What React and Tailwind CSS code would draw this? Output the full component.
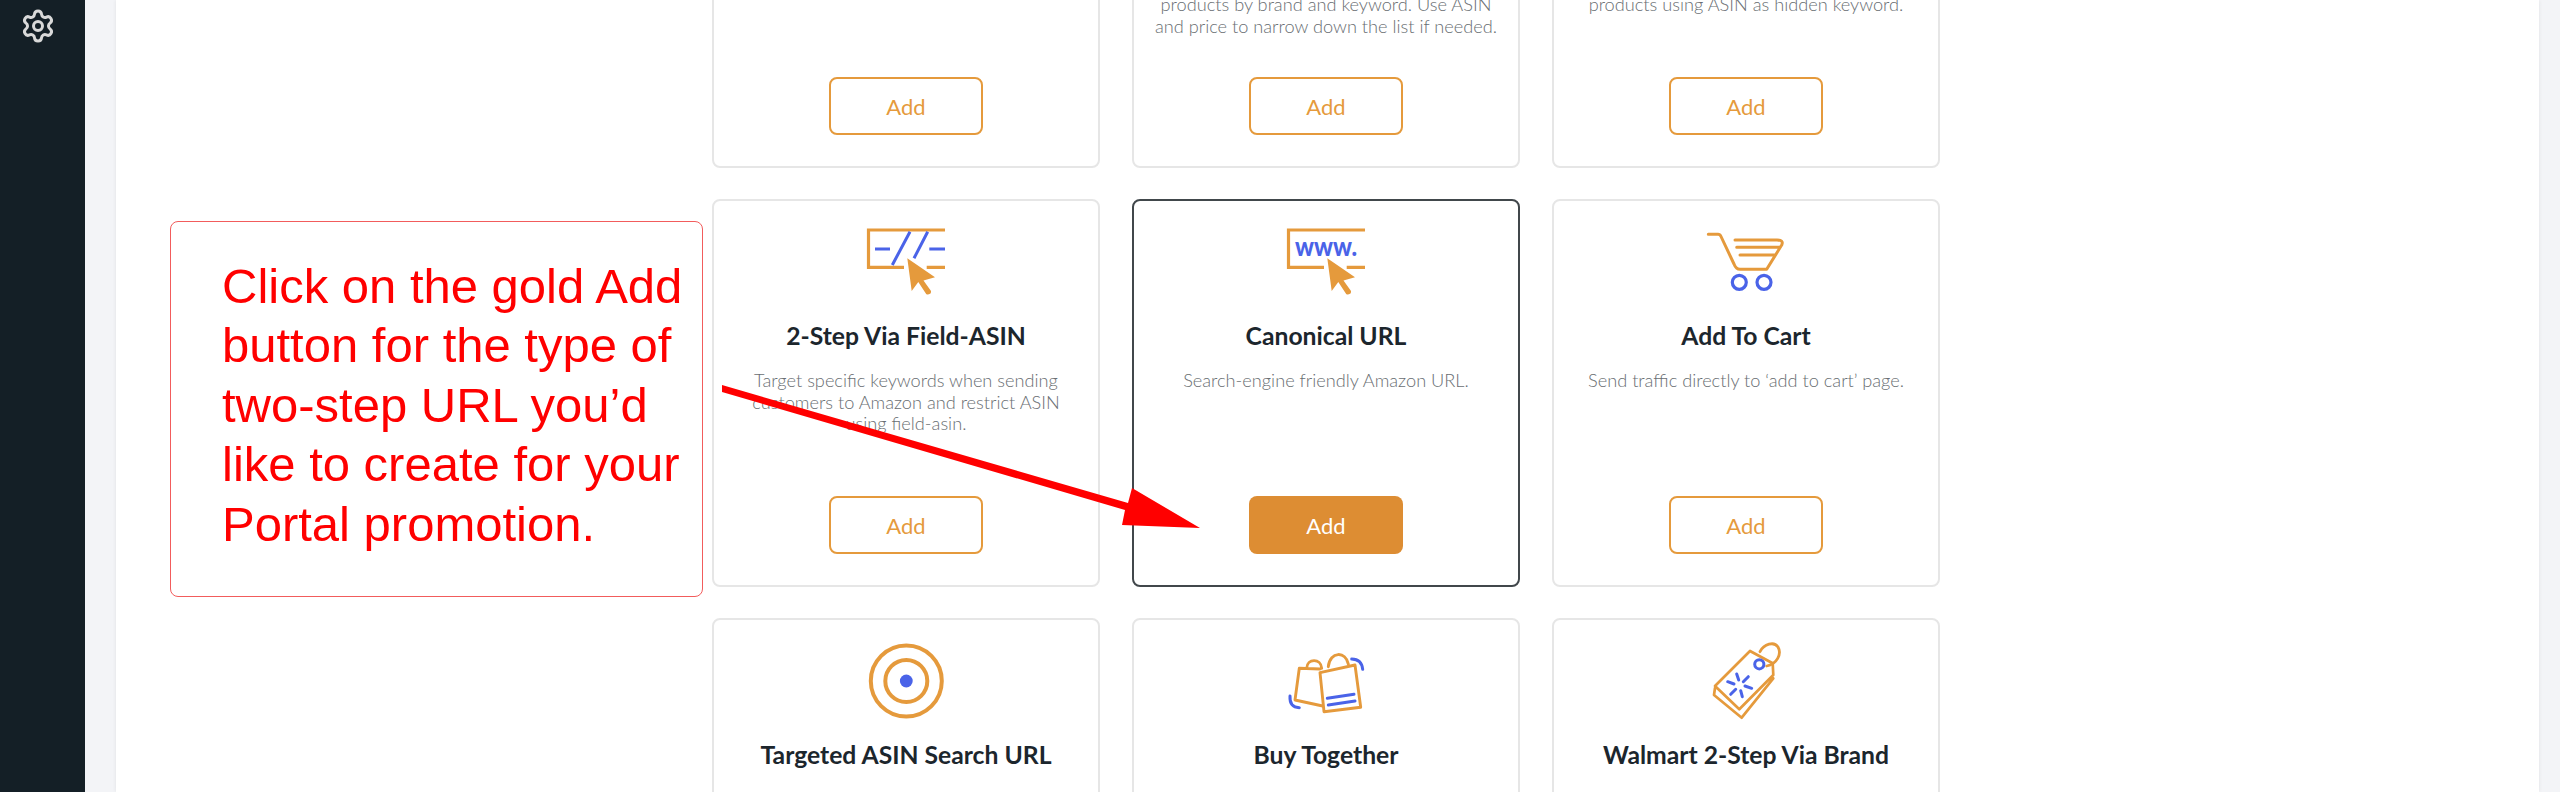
import { Settings } from "lucide-react";

const ORANGE = "#e59a3c";
const BLUE = "#4a63e8";

function Frame() {
    return (
        <>
            <path d="M79 7H2.5V44.3H38M60.7 44.3H79" fill="none" stroke={ORANGE} strokeWidth="3.2" />
            <path
                d="M41.3 35.3L69 54.3L57.5 57.5L65 68Q65.5 71 62 71.5Q60.5 72 59.5 70L52.3 59L45.7 68Z"
                fill={ORANGE}
            />
        </>
    );
}

function ViaIcon() {
    return (
        <svg width="80" height="80" viewBox="0 0 80 80">
            <Frame />
            <path
                d="M9 26H24M44 8.7L26.3 42M61.7 8.7L48 35.3M63.3 26H79"
                fill="none"
                stroke={BLUE}
                strokeWidth="3"
            />
        </svg>
    );
}

function WwwIcon() {
    return (
        <svg width="80" height="80" viewBox="0 0 80 80">
            <Frame />
            <text
                x="9"
                y="33"
                fontFamily="Lato, sans-serif"
                fontWeight="900"
                fontSize="27"
                fill={BLUE}
                textLength="62"
                lengthAdjust="spacingAndGlyphs"
            >
                www.
            </text>
        </svg>
    );
}

function CartIcon() {
    return (
        <svg width="80" height="80" viewBox="0 0 80 80" fill="none" strokeLinecap="round" strokeLinejoin="round">
            <path
                d="M2.3 11.3H12Q14 11.3 15 13.5L28 41Q30 46.3 34 46.3H60.7L75.7 22Q78 17 71 17H29M30.7 24.3H74M34 32H69"
                stroke={ORANGE}
                strokeWidth="3"
            />
            <circle cx="33.3" cy="59.3" r="7" stroke={BLUE} strokeWidth="3.2" />
            <circle cx="58" cy="59.3" r="7" stroke={BLUE} strokeWidth="3.2" />
        </svg>
    );
}

function TargetIcon() {
    return (
        <svg width="80" height="80" viewBox="0 0 80 80" fill="none">
            <circle cx="40.3" cy="39" r="35.5" stroke={ORANGE} strokeWidth="4" />
            <circle cx="40.3" cy="39" r="21" stroke={ORANGE} strokeWidth="4" />
            <circle cx="40.3" cy="39" r="6.4" fill={BLUE} />
        </svg>
    );
}

function BagsIcon() {
    return (
        <svg width="80" height="80" viewBox="0 0 80 80" fill="none" strokeLinecap="round" strokeLinejoin="round">
            <path
                d="M34 27L13.3 26.3L9 58L36.7 64M20.7 26.3C21 16 35 16 35.7 26.3"
                stroke={ORANGE}
                strokeWidth="2.9"
            />
            <path
                d="M34 30.7L69 23L74.7 65.3L38 69.7ZM42.3 24.7C44 9 60 9 62.3 22"
                stroke={ORANGE}
                strokeWidth="2.9"
            />
            <path
                d="M41.3 56.3L68 52.3M42.3 63L69 59M65.7 17Q75.7 17.3 76.7 27.3M4 54Q3.3 65.3 13.3 65.7"
                stroke={BLUE}
                strokeWidth="3"
            />
        </svg>
    );
}

function TagIcon() {
    return (
        <svg width="80" height="80" viewBox="0 0 80 80" fill="none" strokeLinecap="round" strokeLinejoin="round">
            <path
                d="M44 9L66.7 21.3L67.3 33L33.3 67.3L9 44ZM9 46L8 53L35.7 75.7L67.3 36.3"
                stroke={ORANGE}
                strokeWidth="2.7"
            />
            <path
                d="M54 9.7C58 2 68 -1 72 5C76 12 71 22 60.7 24"
                stroke={ORANGE}
                strokeWidth="2.8"
            />
            <circle cx="53.3" cy="22.3" r="4.6" stroke={BLUE} strokeWidth="3" />
            <path
                d="M30.7 32L32.7 38M42.3 34.7L37.3 39.7M45.7 46.3L39 44M36.3 54.7L34.7 48.7M24.7 52.3L29.7 47.3M21.7 39.7L28 42"
                stroke={BLUE}
                strokeWidth="3"
            />
        </svg>
    );
}

const cards = [
    { title: "2-Step Via Brand", desc: "", icon: <div className="h-20" /> },
    {
        title: "Targeted Search",
        desc: "Send customers to a search\nresults page that shows\nproducts by brand and keyword. Use ASIN\nand price to narrow down the list if needed.",
        icon: <div className="h-20" />,
    },
    {
        title: "Hidden Keyword",
        desc: "Send customers to a search\nresults page that shows\nproducts using ASIN as hidden keyword.",
        icon: <div className="h-20" />,
    },
    {
        title: "2-Step Via Field-ASIN",
        desc: "Target specific keywords when sending\ncustomers to Amazon and restrict ASIN\nusing field-asin.",
        icon: <ViaIcon />,
    },
    { title: "Canonical URL", desc: "Search-engine friendly Amazon URL.", icon: <WwwIcon />, selected: true },
    { title: "Add To Cart", desc: "Send traffic directly to ‘add to cart’ page.", icon: <CartIcon /> },
    { title: "Targeted ASIN Search URL", desc: "", icon: <TargetIcon /> },
    { title: "Buy Together", desc: "", icon: <BagsIcon /> },
    { title: "Walmart 2-Step Via Brand", desc: "", icon: <TagIcon /> },
];

function Card({ title, desc, icon, selected }) {
    return (
        <div
            className={`h-[388px] flex flex-col items-center rounded-lg border-2 bg-white pt-[22px] pb-[31px] ${
                selected ? "border-[#41474b]" : "border-[#e6e6e6]"
            }`}
        >
            {icon}
            <h3 className="mt-[18px] text-[24.7px] leading-[30px] font-bold text-[#1c262d] text-center">{title}</h3>
            <p className="mt-[19px] whitespace-pre-line text-[18.2px] leading-[21.5px] font-light text-[#696e72] text-center">
                {desc}
            </p>
            <button
                className={`mt-auto w-[154px] h-[58px] rounded-lg text-[22px] ${
                    selected
                        ? "bg-[#dd8d33] text-white"
                        : "border-2 border-[#e59a3c] text-[#e59a3c] bg-white"
                }`}
            >
                Add
            </button>
        </div>
    );
}

export default function App() {
    return (
        <div className="relative flex h-[792px] overflow-hidden bg-[#f3f4f7] font-['Lato',sans-serif]">
            <aside className="w-[85px] shrink-0 bg-[#141f26] flex justify-center pt-[8px] pr-[9px]">
                <Settings size={36} strokeWidth={2} className="text-[#d9d9d9]" />
            </aside>
            <main className="flex-1 ml-[31px] mr-[21px] bg-white shadow-[0_0_4px_rgba(0,0,0,0.08)] flex items-start">
                <div className="ml-[54px] mt-[221px] w-[533px] h-[376px] shrink-0 rounded-lg border border-[#f25c5c] pt-[35px] pl-[51px] pr-[8px] font-['Liberation_Sans',Arial,sans-serif] text-[49px] leading-[59.4px] text-[#ff0000]">
                    Click on the gold Add button for the type of two-step URL you’d like to create for your Portal promotion.
                </div>
                <div className="ml-[9px] -mt-[220px] grid grid-cols-[repeat(3,388px)] gap-x-[32px] gap-y-[31px]">
                    {cards.map((c) => (
                        <Card key={c.title} {...c} />
                    ))}
                </div>
            </main>
            {/* annotation arrow drawn over the cards */}
            <svg className="absolute left-0 top-0 pointer-events-none" width="2560" height="792">
                <path d="M722 385L1128 503L1132 488L1200 528L1122 525L1125 510L722 392Z" fill="#ff0000" />
            </svg>
        </div>
    );
}
